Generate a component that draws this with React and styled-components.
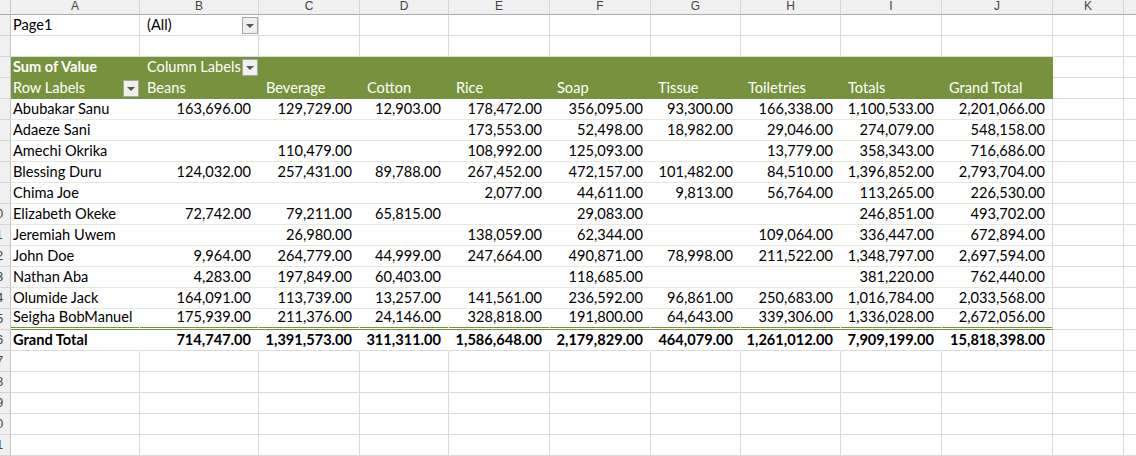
import React from 'react';
import styled, {createGlobalStyle, css} from 'styled-components';

const GlobalStyle = createGlobalStyle`
    html, body {
        margin: 0;
        padding: 0;
        background: #ffffff;
        overflow: hidden;
    }
    body {
        font-family: Lato, "Liberation Sans", sans-serif;
    }
`;

// column widths incl. right gridline: row header, A..L
const COLS = [29, 129, 119, 101, 89, 101, 101, 90, 100, 101, 111, 71, 80];
const LETTERS = ['A', 'B', 'C', 'D', 'E', 'F', 'G', 'H', 'I', 'J', 'K', 'L'];
const GRID = '#dadada';
const OLIVE = '#76923c';

const ITEMS = ['Beans', 'Beverage', 'Cotton', 'Rice', 'Soap', 'Tissue', 'Toiletries', 'Totals', 'Grand Total'];

const ROWS = [
    ['Abubakar Sanu', '163,696.00', '129,729.00', '12,903.00', '178,472.00', '356,095.00', '93,300.00', '166,338.00', '1,100,533.00', '2,201,066.00'],
    ['Adaeze Sani', '', '', '', '173,553.00', '52,498.00', '18,982.00', '29,046.00', '274,079.00', '548,158.00'],
    ['Amechi Okrika', '', '110,479.00', '', '108,992.00', '125,093.00', '', '13,779.00', '358,343.00', '716,686.00'],
    ['Blessing Duru', '124,032.00', '257,431.00', '89,788.00', '267,452.00', '472,157.00', '101,482.00', '84,510.00', '1,396,852.00', '2,793,704.00'],
    ['Chima Joe', '', '', '', '2,077.00', '44,611.00', '9,813.00', '56,764.00', '113,265.00', '226,530.00'],
    ['Elizabeth Okeke', '72,742.00', '79,211.00', '65,815.00', '', '29,083.00', '', '', '246,851.00', '493,702.00'],
    ['Jeremiah Uwem', '', '26,980.00', '', '138,059.00', '62,344.00', '', '109,064.00', '336,447.00', '672,894.00'],
    ['John Doe', '9,964.00', '264,779.00', '44,999.00', '247,664.00', '490,871.00', '78,998.00', '211,522.00', '1,348,797.00', '2,697,594.00'],
    ['Nathan Aba', '4,283.00', '197,849.00', '60,403.00', '', '118,685.00', '', '', '381,220.00', '762,440.00'],
    ['Olumide Jack', '164,091.00', '113,739.00', '13,257.00', '141,561.00', '236,592.00', '96,861.00', '250,683.00', '1,016,784.00', '2,033,568.00'],
    ['Seigha BobManuel', '175,939.00', '211,376.00', '24,146.00', '328,818.00', '191,800.00', '64,643.00', '339,306.00', '1,336,028.00', '2,672,056.00'],
];

const TOTAL = ['Grand Total', '714,747.00', '1,391,573.00', '311,311.00', '1,586,648.00', '2,179,829.00', '464,079.00', '1,261,012.00', '7,909,199.00', '15,818,398.00'];

const Viewport = styled.div`
    width: 1136px;
    height: 456px;
    overflow: hidden;
`;

// the sheet is scrolled so only the end of the row number column shows
const Sheet = styled.div`
    margin-left: -18px;
    width: max-content;
`;

const Row = styled.div`
    display: grid;
    grid-template-columns: ${COLS.map(c => `${c}px`).join(' ')};
    height: ${p => p.$h || 21}px;
`;

const ColHead = styled.div`
    box-sizing: border-box;
    display: flex;
    align-items: flex-end;
    justify-content: center;
    padding-bottom: 2px;
    background: #f0f0f0;
    color: #444444;
    font-family: "Liberation Sans", Arial, sans-serif;
    font-size: 12px;
    line-height: 12px;
    border-right: 1px solid ${p => p.$corner ? '#c6c6c6' : '#d5d5d5'};
    border-bottom: 1px solid #ababab;
    overflow: hidden;
`;

const RowNum = styled.div`
    box-sizing: border-box;
    display: flex;
    align-items: flex-end;
    justify-content: center;
    padding-bottom: 2px;
    background: #f0f0f0;
    color: #444444;
    font-family: "Liberation Sans", Arial, sans-serif;
    font-size: 13px;
    line-height: 16px;
    border-right: 1px solid #c6c6c6;
    border-bottom: 1px solid #d5d5d5;
`;

const kinds = {
    plain: css`
        background: #ffffff;
        border-right: 1px solid ${GRID};
        border-bottom: 1px solid ${GRID};
    `,
    head: css`
        background: ${OLIVE};
        color: #ffffff;
        border-right: 1px solid ${OLIVE};
        border-bottom: 1px solid ${OLIVE};
    `,
    body: css`
        background: #ffffff;
        border-right: 1px solid #ffffff;
        border-bottom: 1px solid #e4eada;
    `,
    last: css`
        background: #ffffff;
        border-right: 1px solid #ffffff;
        border-bottom: 3px double ${OLIVE};
    `,
    total: css`
        background: #ffffff;
        border-right: 1px solid #ffffff;
        border-bottom: 1px solid ${GRID};
        font-weight: 700;
    `,
};

const Cell = styled.div`
    box-sizing: border-box;
    min-width: 0;
    display: flex;
    align-items: flex-end;
    justify-content: ${p => p.$right ? 'flex-end' : 'flex-start'};
    padding: 0 ${p => p.$right ? 7 : 0}px 1px ${p => p.$first ? 2 : 7}px;
    color: #000000;
    font-size: 14.6px;
    line-height: 18px;
    white-space: nowrap;
    overflow: hidden;
    ${p => kinds[p.$kind || 'plain']}
    ${p => p.$edge && css`border-right-color: ${GRID};`}
    ${p => p.$bold && css`font-weight: 700;`}
    ${p => p.$drop && css`padding-right: 0; padding-bottom: 1px;`}
`;

const Label = styled.span`
    flex: 1;
    min-width: 0;
    overflow: hidden;
`;

const DropButton = styled.div`
    box-sizing: border-box;
    flex-shrink: 0;
    width: 16px;
    height: 17px;
    display: flex;
    align-items: center;
    justify-content: center;
    background: #efefef;
    border: 1px solid #a6a6a6;
    &::after {
        content: '';
        border-left: 4px solid transparent;
        border-right: 4px solid transparent;
        border-top: 4px solid #555555;
        margin-top: 1px;
    }
`;

const Blank = ({kind, edge}) => <Cell $kind={kind} $edge={edge} />;

// K and L columns outside the pivot
const Tail = () => (
    <>
        <Cell />
        <Cell />
    </>
);

const SheetRow = ({n, children}) => (
    <Row>
        <RowNum>{n}</RowNum>
        {children}
    </Row>
);

const App = () => {
    return (
        <Viewport>
            <GlobalStyle />
            <Sheet>
                <Row $h={15}>
                    <ColHead $corner />
                    {LETTERS.map(l => <ColHead key={l}>{l}</ColHead>)}
                </Row>

                <SheetRow n={1}>
                    <Cell $first>Page1</Cell>
                    <Cell $drop>
                        <Label>(All)</Label>
                        <DropButton />
                    </Cell>
                    {LETTERS.slice(2).map(l => <Blank key={l} />)}
                </SheetRow>

                <SheetRow n={2}>
                    {LETTERS.map(l => <Blank key={l} />)}
                </SheetRow>

                <SheetRow n={3}>
                    <Cell $kind="head" $first $bold>Sum of Value</Cell>
                    <Cell $kind="head" $drop>
                        <Label>Column Labels</Label>
                        <DropButton />
                    </Cell>
                    {ITEMS.slice(1).map(i => <Blank key={i} kind="head" />)}
                    <Tail />
                </SheetRow>

                <SheetRow n={4}>
                    <Cell $kind="head" $first $drop>
                        <Label>Row Labels</Label>
                        <DropButton />
                    </Cell>
                    {ITEMS.map(i => <Cell key={i} $kind="head">{i}</Cell>)}
                    <Tail />
                </SheetRow>

                {ROWS.map((r, idx) => {
                    const kind = idx === ROWS.length - 1 ? 'last' : 'body';
                    return (
                        <SheetRow key={r[0]} n={idx + 5}>
                            <Cell $kind={kind} $first>{r[0]}</Cell>
                            {r.slice(1).map((v, j) => (
                                <Cell key={j} $kind={kind} $right $edge={j === 8}>{v}</Cell>
                            ))}
                            <Tail />
                        </SheetRow>
                    );
                })}

                <SheetRow n={16}>
                    <Cell $kind="total" $first>{TOTAL[0]}</Cell>
                    {TOTAL.slice(1).map((v, j) => (
                        <Cell key={j} $kind="total" $right $edge={j === 8}>{v}</Cell>
                    ))}
                    <Tail />
                </SheetRow>

                {[17, 18, 19, 20, 21, 22].map(n => (
                    <SheetRow key={n} n={n}>
                        {LETTERS.map(l => <Blank key={l} />)}
                    </SheetRow>
                ))}
            </Sheet>
        </Viewport>
    );
};

export default App;
